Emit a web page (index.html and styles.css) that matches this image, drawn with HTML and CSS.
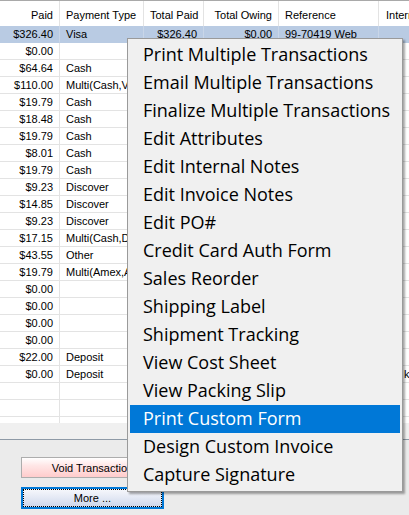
FILE: index.html
```html
<!DOCTYPE html>
<html>
<head>
<meta charset="utf-8">
<link rel="stylesheet" href="styles.css">
</head>
<body>
<div class="screen">
  <div class="grid">
    <div class="row head">
      <div class="c num">Paid</div>
      <div class="c">Payment Type</div>
      <div class="c num">Total Paid</div>
      <div class="c num">Total Owing</div>
      <div class="c">Reference</div>
      <div class="c last">Internal Notes</div>
    </div>
    <div class="rows">
      <div class="row sel"><div class="c num">$326.40</div><div class="c">Visa</div><div class="c num">$326.40</div><div class="c num">$0.00</div><div class="c">99-70419 Web</div><div class="c last"></div></div>
      <div class="row"><div class="c num">$0.00</div><div class="c"></div><div class="c num"></div><div class="c num"></div><div class="c"></div><div class="c last"></div></div>
      <div class="row"><div class="c num">$64.64</div><div class="c">Cash</div><div class="c num"></div><div class="c num"></div><div class="c"></div><div class="c last"></div></div>
      <div class="row"><div class="c num">$110.00</div><div class="c">Multi(Cash,Vi</div><div class="c num"></div><div class="c num"></div><div class="c"></div><div class="c last"></div></div>
      <div class="row"><div class="c num">$19.79</div><div class="c">Cash</div><div class="c num"></div><div class="c num"></div><div class="c"></div><div class="c last"></div></div>
      <div class="row"><div class="c num">$18.48</div><div class="c">Cash</div><div class="c num"></div><div class="c num"></div><div class="c"></div><div class="c last"></div></div>
      <div class="row"><div class="c num">$19.79</div><div class="c">Cash</div><div class="c num"></div><div class="c num"></div><div class="c"></div><div class="c last"></div></div>
      <div class="row"><div class="c num">$8.01</div><div class="c">Cash</div><div class="c num"></div><div class="c num"></div><div class="c"></div><div class="c last"></div></div>
      <div class="row"><div class="c num">$19.79</div><div class="c">Cash</div><div class="c num"></div><div class="c num"></div><div class="c"></div><div class="c last"></div></div>
      <div class="row"><div class="c num">$9.23</div><div class="c">Discover</div><div class="c num"></div><div class="c num"></div><div class="c"></div><div class="c last"></div></div>
      <div class="row"><div class="c num">$14.85</div><div class="c">Discover</div><div class="c num"></div><div class="c num"></div><div class="c"></div><div class="c last"></div></div>
      <div class="row"><div class="c num">$9.23</div><div class="c">Discover</div><div class="c num"></div><div class="c num"></div><div class="c"></div><div class="c last"></div></div>
      <div class="row"><div class="c num">$17.15</div><div class="c">Multi(Cash,D</div><div class="c num"></div><div class="c num"></div><div class="c"></div><div class="c last"></div></div>
      <div class="row"><div class="c num">$43.55</div><div class="c">Other</div><div class="c num"></div><div class="c num"></div><div class="c"></div><div class="c last"></div></div>
      <div class="row"><div class="c num">$19.79</div><div class="c">Multi(Amex,A</div><div class="c num"></div><div class="c num"></div><div class="c"></div><div class="c last"></div></div>
      <div class="row"><div class="c num">$0.00</div><div class="c"></div><div class="c num"></div><div class="c num"></div><div class="c"></div><div class="c last"></div></div>
      <div class="row"><div class="c num">$0.00</div><div class="c"></div><div class="c num"></div><div class="c num"></div><div class="c"></div><div class="c last"></div></div>
      <div class="row"><div class="c num">$0.00</div><div class="c"></div><div class="c num"></div><div class="c num"></div><div class="c"></div><div class="c last"></div></div>
      <div class="row"><div class="c num">$0.00</div><div class="c"></div><div class="c num"></div><div class="c num"></div><div class="c"></div><div class="c last"></div></div>
      <div class="row"><div class="c num">$22.00</div><div class="c">Deposit</div><div class="c num"></div><div class="c num"></div><div class="c"></div><div class="c last"></div></div>
      <div class="row"><div class="c num">$0.00</div><div class="c">Deposit</div><div class="c num"></div><div class="c num"></div><div class="c"></div><div class="c last bank">k</div></div>
      <div class="row"><div class="c num"></div><div class="c"></div><div class="c num"></div><div class="c num"></div><div class="c"></div><div class="c last"></div></div>
      <div class="row"><div class="c num"></div><div class="c"></div><div class="c num"></div><div class="c num"></div><div class="c"></div><div class="c last"></div></div>
      <div class="row"><div class="c num"></div><div class="c"></div><div class="c num"></div><div class="c num"></div><div class="c"></div><div class="c last"></div></div>
    </div>
  </div>
  <div class="panel">
    <button class="btn void">Void Transaction</button>
    <button class="btn more">More ...</button>
  </div>
  <ul class="menu">
    <li class="item">Print Multiple Transactions</li>
    <li class="item">Email Multiple Transactions</li>
    <li class="item">Finalize Multiple Transactions</li>
    <li class="item">Edit Attributes</li>
    <li class="item">Edit Internal Notes</li>
    <li class="item">Edit Invoice Notes</li>
    <li class="item">Edit PO#</li>
    <li class="item">Credit Card Auth Form</li>
    <li class="item">Sales Reorder</li>
    <li class="item">Shipping Label</li>
    <li class="item">Shipment Tracking</li>
    <li class="item">View Cost Sheet</li>
    <li class="item">View Packing Slip</li>
    <li class="item active">Print Custom Form</li>
    <li class="item">Design Custom Invoice</li>
    <li class="item">Capture Signature</li>
  </ul>
</div>
</body>
</html>
```
FILE: styles.css
```css
* { box-sizing: border-box; }
html, body { margin: 0; padding: 0; }
body {
  width: 409px;
  height: 515px;
  overflow: hidden;
  background: #ebebeb;
  font-family: "Liberation Sans", Arial, sans-serif;
  font-size: 11px;
  color: #000;
}
.screen {
  position: relative;
  width: 409px;
  height: 515px;
}
.grid {
  height: 440px;
  background: #f0f0f0;
  border-top: 1px solid #a9a9a9;
  border-bottom: 1px solid #8e9aa6;
  overflow: hidden;
}
.row {
  display: grid;
  grid-template-columns: 60px 84px 60px 75px 100px 1fr;
  height: 17px;
  background: #fff;
}
.row.head {
  height: 25px;
}
.c {
  border-right: 1px solid #e3e3e3;
  border-bottom: 1px solid #e3e3e3;
  line-height: 16px;
  padding: 0 6px 0 6px;
  white-space: nowrap;
  overflow: hidden;
}
.c.num { text-align: right; padding-right: 6px; }
.c.last { border-right: none; padding-left: 7px; }
.c.bank { padding-left: 25px; }
.head .c {
  border-bottom: none;
  padding-top: 3px;
  line-height: 22px;
  color: #000;
}
.head .c.num { padding-right: 6px; }
.rows {
  height: 397px;
  overflow: hidden;
}
.row.sel { background: #b9cbe3; }
.row.sel .c { border-bottom-color: #b9cbe3; border-right-color: #c9d6e8; }
.panel {
  display: flex;
  flex-direction: column;
  gap: 9px;
  padding: 17px 0 0 21px;
}
.btn {
  width: 143px;
  margin: 0;
  padding: 0;
  font-family: "Liberation Sans", Arial, sans-serif;
  font-size: 11px;
  color: #000;
  text-align: center;
}
.void {
  height: 21px;
  border: 1px solid #adadad;
  background: linear-gradient(to bottom, #ffffff 0%, #ffe6e6 40%, #ffcccc 100%);
}
.more {
  height: 22px;
  border: 2px solid #0078d7;
  background: linear-gradient(to bottom, #f7f8fc 0%, #e3e8f4 50%, #ccd5ea 100%);
  outline: 1px dotted #000;
  outline-offset: -3px;
}
.menu {
  position: absolute;
  left: 127px;
  top: 38px;
  width: 276px;
  margin: 0;
  padding: 2px;
  list-style: none;
  background: #f0f0f0;
  border: 1px solid #9a9a9a;
  box-shadow: 2px 2px 2px rgba(0, 0, 0, 0.35);
  font-family: "Open Sans", "Noto Sans", sans-serif;
  font-size: 18px;
}
.item {
  height: 28px;
  line-height: 26px;
  padding: 0 0 2px 13px;
  white-space: nowrap;
  color: #000;
}
.item.active {
  background: #0078d7;
  color: #fff;
}
```
